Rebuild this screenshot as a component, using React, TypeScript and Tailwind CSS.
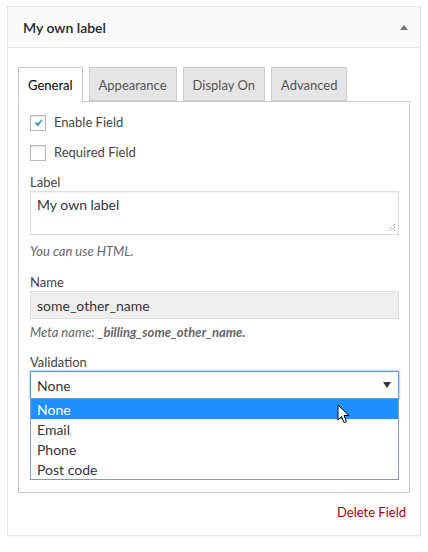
import React from "react";

const font = { fontFamily: '"Segoe UI", Lato, "Noto Sans", sans-serif' };

function Tab({ label, active }: { label: string; active?: boolean }) {
  return (
    <div
      className={
        active
          ? "h-[35px] px-[9px] pt-[3px] flex items-center border border-[#ccc] border-b-white bg-white text-[#000] -mb-px relative z-10"
          : "h-[34px] px-[9px] pt-[3px] flex items-center border border-[#ccc] bg-[#e5e5e5] text-[#555]"
      }
    >
      {label}
    </div>
  );
}

function Check({ checked, label }: { checked?: boolean; label: string }) {
  return (
    <label className="flex items-center gap-[8px] h-[16px]">
      <span className="w-[16px] h-[16px] border border-[#b4b9be] bg-white flex items-center justify-center shadow-[inset_0_1px_2px_rgba(0,0,0,0.1)]">
        {checked && (
          <svg width="14" height="14" viewBox="0 0 20 20">
            <path d="M14.83 4.89l1.34.94-5.81 8.38H9.02L5.78 9.67l1.34-1.25 2.57 2.4z" fill="#1e8cbe" />
          </svg>
        )}
      </span>
      <span className="text-[13px] text-[#444]">{label}</span>
    </label>
  );
}

export default function App() {
  return (
    <div className="w-[428px] h-[552px] bg-white pt-[6px] pl-[7px]" style={font}>
      <div className="w-[414px] h-[530px] border border-[#e5e5e5] bg-white shadow-[0_1px_1px_rgba(0,0,0,0.04)] flex flex-col">
        <div className="h-[41px] bg-[#fafafa] border-b border-[#e5e5e5] flex items-center justify-between pl-[15px] pr-[11px]">
          <span className="text-[14px] font-semibold text-[#23282d]">My own label</span>
          <svg width="10" height="8" viewBox="0 0 10 8">
            <path d="M1 7 L5 2 L9 7 Z" fill="#72777c" />
          </svg>
        </div>

        <div className="px-[10px] pt-[19px]">
          <div className="flex gap-[6px] items-end text-[13px]">
            <Tab label="General" active />
            <Tab label="Appearance" />
            <Tab label="Display On" />
            <Tab label="Advanced" />
          </div>

          <div className="border border-[#ccc] h-[392px] pl-[11px] pr-[10px] pt-[13px]">
            <div className="flex flex-col gap-[14px]">
              <Check checked label="Enable Field" />
              <Check label="Required Field" />
            </div>

            <div className="mt-[12px] text-[13px] text-[#444] leading-[18px]">Label</div>
            <div className="relative h-[44px] border border-[#ddd] bg-white shadow-[inset_0_1px_2px_rgba(0,0,0,0.07)] px-[6px] pt-[2px] text-[14px] text-[#32373c]">
              My own label
              <svg className="absolute right-[2px] bottom-[2px]" width="9" height="9" viewBox="0 0 9 9">
                <path d="M8 1 L1 8 M8 4 L4 8 M8 7 L7 8" stroke="#777" strokeWidth="1" strokeDasharray="1 1" />
              </svg>
            </div>
            <div className="mt-[7px] text-[13px] italic text-[#666] leading-[18px]">You can use HTML.</div>

            <div className="mt-[13px] text-[13px] text-[#444] leading-[18px]">Name</div>
            <div className="h-[28px] border border-[#ddd] bg-[#eee] px-[6px] flex items-center text-[14px] text-[#32373c]">
              some_other_name
            </div>
            <div className="mt-[4px] text-[13px] italic text-[#666] leading-[18px]">
              Meta name: <b className="font-bold">_billing_some_other_name.</b>
            </div>

            <div className="mt-[12px] text-[13px] text-[#444] leading-[18px]">Validation</div>
            <div className="relative">
              <div className="h-[28px] border border-[#5b9dd9] shadow-[0_0_2px_rgba(30,140,190,0.8)] bg-white px-[6px] flex items-center justify-between text-[14px] text-[#32373c]">
                <span>None</span>
                <svg width="8" height="6" viewBox="0 0 8 6" className="mr-[1px]">
                  <path d="M0 0 H8 L4 6 Z" fill="#333" />
                </svg>
              </div>
              <div className="border border-[#7a9cd3] border-t-0 bg-white text-[14px] text-[#32373c]">
                <div className="h-[20px] bg-[#1e90ff] text-white px-[6px] flex items-center">None</div>
                <div className="h-[20px] px-[6px] flex items-center">Email</div>
                <div className="h-[20px] px-[6px] flex items-center">Phone</div>
                <div className="h-[20px] px-[6px] flex items-center">Post code</div>
              </div>
              <svg className="absolute left-[307px] top-[33px]" width="13" height="20" viewBox="0 0 13 20">
                <path d="M1 1 L1 16 L4.5 12.5 L7 18.5 L9.5 17.5 L7 11.5 L12 11.5 Z" fill="#fff" stroke="#000" strokeWidth="1" strokeLinejoin="round" />
              </svg>
            </div>
          </div>

          <div className="flex justify-end pr-[4px] pt-[10px]">
            <span className="text-[13px] text-[#a00]">Delete Field</span>
          </div>
        </div>
      </div>
    </div>
  );
}
